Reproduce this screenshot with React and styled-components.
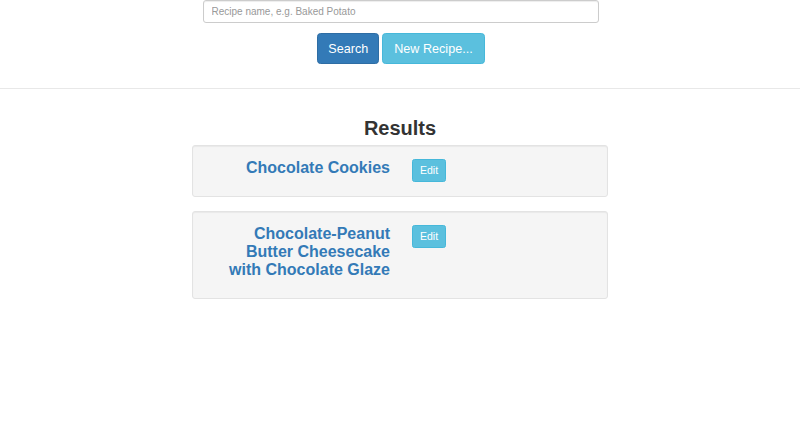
import React from "react";
import styled, { createGlobalStyle } from "styled-components";

const Global = createGlobalStyle`
  html, body { margin: 0; padding: 0; background: #fff; }
  body { font-family: "Liberation Sans", Arial, Helvetica, sans-serif; color: #333; }
  * { box-sizing: border-box; }
`;

const Page = styled.div`
  width: 800px;
  min-height: 435px;
  background: #fff;
`;

const SearchArea = styled.div`
  display: flex;
  flex-direction: column;
  align-items: center;
  padding-bottom: 24px;
  border-bottom: 1px solid #e8e8e8;
`;

const SearchInput = styled.input`
  display: block;
  width: 396px;
  height: 23px;
  margin-left: 1px;
  padding: 0 8px 0 8px;
  font-family: "Liberation Sans", Arial, sans-serif;
  font-size: 10px;
  color: #555;
  background: #fff;
  border: 1px solid #ccc;
  border-radius: 3px;
  box-shadow: inset 0 1px 1px rgba(0, 0, 0, 0.075);
  outline: none;
  &::placeholder { color: #999; }
`;

const ButtonRow = styled.div`
  display: flex;
  gap: 3px;
  margin-top: 10px;
  margin-left: 2px;
`;

const Button = styled.button`
  display: block;
  height: 31px;
  padding: 0 ${(p) => p.$px || 11}px;
  font-family: "Liberation Sans", Arial, sans-serif;
  font-size: 12.6px;
  line-height: 18px;
  color: #fff;
  background: ${(p) => (p.$variant === "info" ? "#5bc0de" : "#337ab7")};
  border: 1px solid ${(p) => (p.$variant === "info" ? "#46b8da" : "#2e6da4")};
  border-radius: 3.6px;
  cursor: pointer;
`;

const Results = styled.section`
  display: flex;
  flex-direction: column;
  align-items: center;
`;

const Heading = styled.h3`
  margin: 28px 0 6px;
  font-size: 20px;
  line-height: 22px;
  font-weight: 700;
  color: #333;
`;

const Card = styled.div`
  width: 416px;
  margin-bottom: 14px;
  padding: 13px 17px 10px;
  background: #f5f5f5;
  border: 1px solid #e3e3e3;
  border-radius: 3px;
  box-shadow: inset 0 1px 1px rgba(0, 0, 0, 0.05);
  display: grid;
  grid-template-columns: 1fr 1fr;
  align-items: start;
`;

const Title = styled.a`
  display: block;
  margin-bottom: 9px;
  padding: 0 10px;
  text-align: right;
  font-size: 16px;
  line-height: 18px;
  font-weight: 700;
  color: #337ab7;
  text-decoration: none;
`;

const EditCell = styled.div`
  display: flex;
  padding: 0 12px;
`;

const EditButton = styled.button`
  display: block;
  height: 23px;
  padding: 0 7px;
  font-family: "Liberation Sans", Arial, sans-serif;
  font-size: 10.5px;
  line-height: 21px;
  color: #fff;
  background: #5bc0de;
  border: 1px solid #46b8da;
  border-radius: 2.5px;
  cursor: pointer;
`;

const recipes = [
  "Chocolate Cookies",
  "Chocolate-Peanut Butter Cheesecake with Chocolate Glaze",
];

export default function App() {
  return (
    <Page>
      <Global />
      <SearchArea>
        <SearchInput placeholder="Recipe name, e.g. Baked Potato" />
        <ButtonRow>
          <Button $px={10}>Search</Button>
          <Button $variant="info">New Recipe...</Button>
        </ButtonRow>
      </SearchArea>
      <Results>
        <Heading>Results</Heading>
        {recipes.map((r) => (
          <Card key={r}>
            <Title href="#">{r}</Title>
            <EditCell>
              <EditButton>Edit</EditButton>
            </EditCell>
          </Card>
        ))}
      </Results>
    </Page>
  );
}
